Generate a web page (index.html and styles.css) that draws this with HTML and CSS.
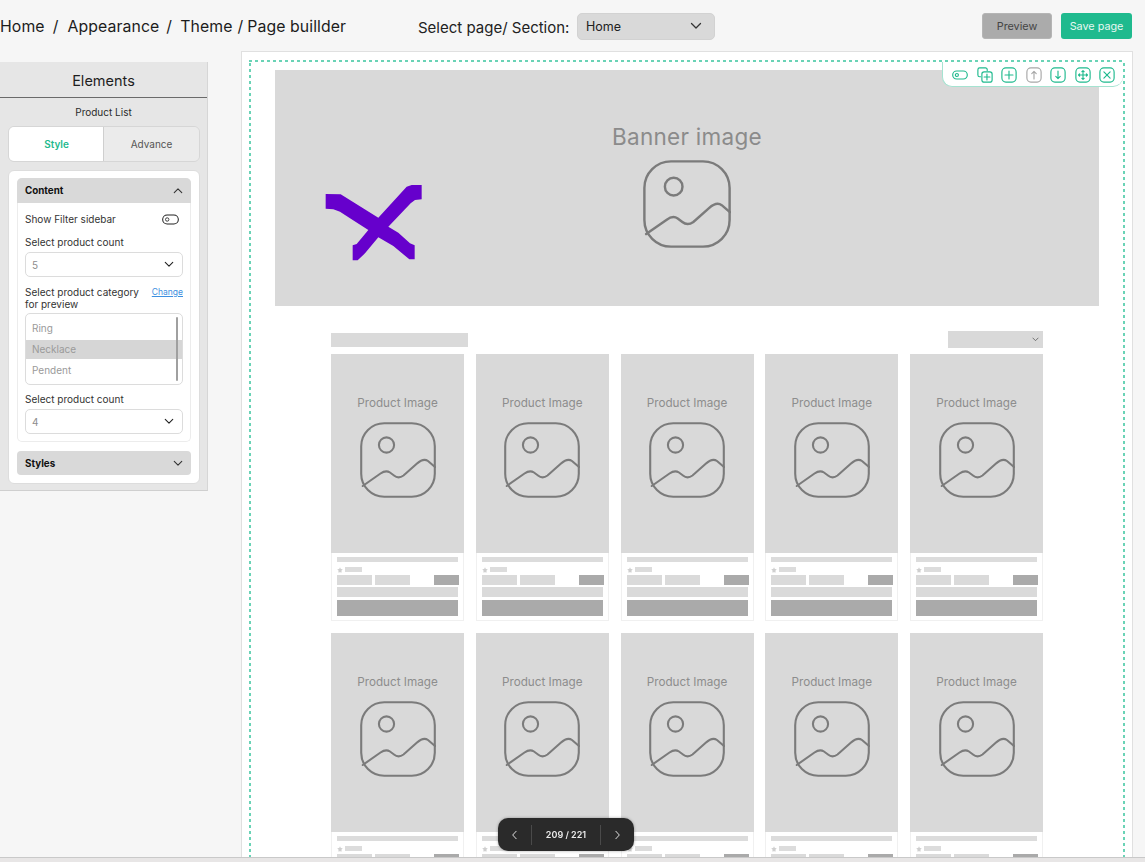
FILE: index.html
```html
<!DOCTYPE html>
<html lang="en">
<head>
<meta charset="utf-8">
<title>Page builder</title>
<link rel="stylesheet" href="styles.css">
</head>
<body>
<svg class="defs" width="0" height="0" aria-hidden="true">
  <symbol id="pic" viewBox="0 0 76 76">
    <rect x="1.200" y="1.200" width="73.600" height="73.600" rx="23" fill="none" stroke="currentColor" stroke-width="2.100"/>
    <circle cx="26.500" cy="23" r="7.600" fill="none" stroke="currentColor" stroke-width="2.100"/>
    <path d="M2.700 64 20.500 51.500C24 49 27 48.500 30 50.500L34 53.500C37 56 40 56 43.500 53.500L57 41.500C61 38 64.500 36.500 68 39L75 45" fill="none" stroke="currentColor" stroke-width="2.100" stroke-linecap="round"/>
  </symbol>
  <symbol id="chev" viewBox="0 0 12 8">
    <path d="M1.500 1.500 6 6l4.500-4.500" fill="none" stroke="currentColor" stroke-width="1.300" stroke-linecap="round" stroke-linejoin="round"/>
  </symbol>
  <symbol id="star" viewBox="0 0 10 10">
    <path d="m5 .5 1.400 3 3.200.4-2.300 2.200.6 3.200L5 8.700 2.100 9.300l.6-3.200L.4 3.900l3.200-.4z" fill="currentColor"/>
  </symbol>
</svg>

<header class="topbar">
  <div class="crumbs"><span>Home</span><span class="s1">/</span><span class="s2">Appearance</span><span class="s3">/</span><span class="s4">Theme</span><span class="s5">/</span><span class="s6">Page buillder</span></div>
  <div class="page-select">
    <span class="page-label">Select page/ Section:</span>
    <div class="page-drop"><span>Home</span><svg class="chev-top"><use href="#chev"/></svg></div>
  </div>
  <div class="actions">
    <button class="btn btn-grey">Preview</button>
    <button class="btn btn-green">Save page</button>
  </div>
</header>

<main class="workspace">
  <aside class="sidebar">
    <h2 class="side-title">Elements</h2>
    <div class="side-sub">Product List</div>
    <div class="tabs">
      <div class="tab tab-on">Style</div>
      <div class="tab">Advance</div>
    </div>
    <div class="panel">
      <section class="acc">
        <div class="acc-head acc-open"><span>Content</span><svg class="chev flip"><use href="#chev"/></svg></div>
        <div class="acc-body">
          <div class="row-between filter-row">
            <span>Show Filter sidebar</span>
            <svg class="toggle" viewBox="0 0 18 11"><rect x=".7" y=".7" width="16.600" height="9.600" rx="4.800" fill="none" stroke="#222" stroke-width="1.100"/><circle cx="5.500" cy="5.500" r="1.800" fill="none" stroke="#222" stroke-width=".9"/></svg>
          </div>
          <label class="lbl">Select product count</label>
          <div class="sel"><span>5</span><svg class="chev"><use href="#chev"/></svg></div>
          <div class="row-between cat-row">
            <span class="lbl-cat">Select product category for preview</span>
            <a class="change">Change</a>
          </div>
          <div class="list">
            <div class="item">Ring</div>
            <div class="item item-on">Necklace</div>
            <div class="item">Pendent</div>
            <i class="scroll"></i>
          </div>
          <label class="lbl lbl-tight">Select product count</label>
          <div class="sel"><span>4</span><svg class="chev"><use href="#chev"/></svg></div>
        </div>
      </section>
      <div class="acc-head acc-closed"><span>Styles</span><svg class="chev"><use href="#chev"/></svg></div>
    </div>
  </aside>

  <section class="canvas">
    <div class="frame">
      <div class="toolbar">
        <svg viewBox="0 0 18 18"><rect x=".8" y="4.500" width="16.400" height="9" rx="4.500"/><circle cx="5.500" cy="9" r="1.700"/></svg>
        <svg viewBox="0 0 18 18"><path d="M11.500 4V3a2 2 0 0 0-2-2H3a2 2 0 0 0-2 2v6a2 2 0 0 0 2 2h1"/><rect x="5.500" y="5.500" width="11.500" height="11.500" rx="2.500"/><path d="M11.200 8v6.500M8 11.200h6.500"/></svg>
        <svg viewBox="0 0 18 18"><rect x="1" y="1" width="16" height="16" rx="4.500"/><path d="M9 4.500v9M4.500 9h9"/></svg>
        <svg class="muted" viewBox="0 0 18 18"><rect x="1" y="1" width="16" height="16" rx="4.500"/><path d="M9 13.500v-8M6.500 7.500 9 5l2.500 2.500"/></svg>
        <svg viewBox="0 0 18 18"><rect x="1" y="1" width="16" height="16" rx="4.500"/><path d="M9 4.500v8M6.500 10.500 9 13l2.500-2.500"/></svg>
        <svg viewBox="0 0 18 18"><rect x="1" y="1" width="16" height="16" rx="4.500"/><path d="M9 4v10M4 9h10M7.700 5.200 9 4l1.300 1.200M7.700 12.800 9 14l1.300-1.200M5.200 7.700 4 9l1.200 1.300M12.800 7.700 14 9l-1.200 1.300"/></svg>
        <svg viewBox="0 0 18 18"><rect x="1" y="1" width="16" height="16" rx="4.500"/><path d="m5.500 5.500 7 7M12.500 5.500l-7 7"/></svg>
      </div>

      <div class="banner">
        <div class="banner-text">Banner image</div>
        <svg class="banner-pic"><use href="#pic"/></svg>
        <svg class="scribble" viewBox="0 0 390 450"><path d="M47 222 92 223 205 293 290 200 305 195H335V238L315 240 302 250 235 320 265 338 300 370 314 376V418H298L250 378 205 352 165 400 143 421H128V376L140 372 175 330 120 295 90 275 70 268 47 266Z"/></svg>
      </div>

      <div class="products">
        <div class="prod-head">
          <div class="ph-title"></div>
          <div class="ph-drop"><svg class="chev-mini"><use href="#chev"/></svg></div>
        </div>
        <div class="grid">
          <article class="card"><div class="card-img"><span>Product Image</span><svg class="card-pic"><use href="#pic"/></svg></div><div class="meta"><div class="b-title"></div><div class="b-rate"><svg class="star"><use href="#star"/></svg><i></i></div><div class="b-price"><i></i><i></i><b></b></div><div class="b-line"></div><div class="b-btn"></div></div></article>
          <article class="card"><div class="card-img"><span>Product Image</span><svg class="card-pic"><use href="#pic"/></svg></div><div class="meta"><div class="b-title"></div><div class="b-rate"><svg class="star"><use href="#star"/></svg><i></i></div><div class="b-price"><i></i><i></i><b></b></div><div class="b-line"></div><div class="b-btn"></div></div></article>
          <article class="card"><div class="card-img"><span>Product Image</span><svg class="card-pic"><use href="#pic"/></svg></div><div class="meta"><div class="b-title"></div><div class="b-rate"><svg class="star"><use href="#star"/></svg><i></i></div><div class="b-price"><i></i><i></i><b></b></div><div class="b-line"></div><div class="b-btn"></div></div></article>
          <article class="card"><div class="card-img"><span>Product Image</span><svg class="card-pic"><use href="#pic"/></svg></div><div class="meta"><div class="b-title"></div><div class="b-rate"><svg class="star"><use href="#star"/></svg><i></i></div><div class="b-price"><i></i><i></i><b></b></div><div class="b-line"></div><div class="b-btn"></div></div></article>
          <article class="card"><div class="card-img"><span>Product Image</span><svg class="card-pic"><use href="#pic"/></svg></div><div class="meta"><div class="b-title"></div><div class="b-rate"><svg class="star"><use href="#star"/></svg><i></i></div><div class="b-price"><i></i><i></i><b></b></div><div class="b-line"></div><div class="b-btn"></div></div></article>
          <article class="card"><div class="card-img"><span>Product Image</span><svg class="card-pic"><use href="#pic"/></svg></div><div class="meta"><div class="b-title"></div><div class="b-rate"><svg class="star"><use href="#star"/></svg><i></i></div><div class="b-price"><i></i><i></i><b></b></div><div class="b-line"></div><div class="b-btn"></div></div></article>
          <article class="card"><div class="card-img"><span>Product Image</span><svg class="card-pic"><use href="#pic"/></svg></div><div class="meta"><div class="b-title"></div><div class="b-rate"><svg class="star"><use href="#star"/></svg><i></i></div><div class="b-price"><i></i><i></i><b></b></div><div class="b-line"></div><div class="b-btn"></div></div></article>
          <article class="card"><div class="card-img"><span>Product Image</span><svg class="card-pic"><use href="#pic"/></svg></div><div class="meta"><div class="b-title"></div><div class="b-rate"><svg class="star"><use href="#star"/></svg><i></i></div><div class="b-price"><i></i><i></i><b></b></div><div class="b-line"></div><div class="b-btn"></div></div></article>
          <article class="card"><div class="card-img"><span>Product Image</span><svg class="card-pic"><use href="#pic"/></svg></div><div class="meta"><div class="b-title"></div><div class="b-rate"><svg class="star"><use href="#star"/></svg><i></i></div><div class="b-price"><i></i><i></i><b></b></div><div class="b-line"></div><div class="b-btn"></div></div></article>
          <article class="card"><div class="card-img"><span>Product Image</span><svg class="card-pic"><use href="#pic"/></svg></div><div class="meta"><div class="b-title"></div><div class="b-rate"><svg class="star"><use href="#star"/></svg><i></i></div><div class="b-price"><i></i><i></i><b></b></div><div class="b-line"></div><div class="b-btn"></div></div></article>
        </div>
      </div>
    </div>
  </section>
</main>

<footer class="strip"></footer>

<nav class="pager">
  <svg class="pg-arrow" viewBox="0 0 8 12"><path d="M6 1.500 1.800 6 6 10.500"/></svg>
  <span class="pg-sep"></span>
  <span class="pg-text">209 / 221</span>
  <span class="pg-sep"></span>
  <svg class="pg-arrow" viewBox="0 0 8 12"><path d="M2 1.500 6.200 6 2 10.500"/></svg>
</nav>
</body>
</html>
```
FILE: styles.css
```css
* { box-sizing: border-box; }
html, body { margin: 0; height: 862px; overflow: hidden; }
body {
  display: flex;
  flex-direction: column;
  background: #f6f6f6;
  color: #222;
  font-family: Inter, "Liberation Sans", sans-serif;
}
.defs { position: absolute; }

.topbar {
  height: 51px;
  flex: none;
  display: grid;
  grid-template-columns: 418px 1fr auto;
  padding-right: 13px;
  align-items: start;
}
.crumbs {
  display: flex;
  margin-top: 17px;
  font-size: 15.800px;
  line-height: 20px;
  color: #1c1c1c;
  white-space: nowrap;
  letter-spacing: .1px;
}
.s1 { margin-left: 8px; }
.s2 { margin-left: 9px; }
.s3 { margin-left: 7px; }
.s4 { margin-left: 8px; }
.s5 { margin-left: 5px; }
.s6 { margin-left: 4px; }

.page-select { display: flex; align-items: flex-start; margin-top: 13px; }
.page-label { font-size: 15px; line-height: 18px; margin-top: 6px; color: #222; width: 159px; }
.page-drop {
  width: 138px;
  height: 27px;
  background: #d9d9d9;
  border: 1px solid #d2d2d2;
  border-radius: 5px;
  display: flex;
  align-items: center;
  justify-content: space-between;
  padding: 0 12px 1px 8px;
  font-size: 12.500px;
  color: #222;
}
.chev-top { width: 12px; height: 8px; color: #333; }

.actions { display: flex; gap: 9px; margin-top: 13px; }
.btn {
  height: 26px;
  border: 0;
  border-radius: 3px;
  font-family: inherit;
  font-size: 10.800px;
  padding: 0;
}
.btn-grey { width: 70px; background: #ababab; color: #444; border: 1px solid #b5b5b5; }
.btn-green { width: 71px; background: #1fba8e; color: #e6f8f2; }

.workspace { flex: 1; min-height: 0; display: flex; align-items: flex-start; }

.sidebar {
  width: 208px;
  height: 429px;
  flex: none;
  margin-top: 11px;
  background: #e6e6e6;
  border-right: 1px solid #d6d6d6;
  border-bottom: 1px solid #cfcfcf;
}
.side-title {
  margin: 0;
  height: 36px;
  border-bottom: 1px solid #6a6a6a;
  text-align: center;
  font-size: 14.500px;
  font-weight: 400;
  line-height: 37px;
  color: #1e1e1e;
}
.side-sub { text-align: center; font-size: 10px; line-height: 12px; margin-top: 8px; color: #2a2a2a; }
.tabs {
  display: flex;
  width: 192px;
  height: 36px;
  margin: 8px 0 0 8px;
  border: 1px solid #d6d6d6;
  border-radius: 6px;
  overflow: hidden;
  font-size: 10px;
}
.tab { flex: 1; display: flex; align-items: center; justify-content: center; color: #555; background: #ebebeb; }
.tab-on { background: #fff; color: #1fba8e; font-weight: 600; border-right: 1px solid #cfcfcf; flex: none; width: 95px; padding-left: 1px; }
.panel {
  width: 192px;
  height: 314px;
  margin: 8px 0 0 8px;
  padding: 7px 8px 8px;
  background: #fff;
  border: 1px solid #ddd;
  border-radius: 6px;
}
.acc { border: 1px solid #ececec; border-top: 0; border-radius: 5px; height: 264px; }
.acc-head {
  display: flex;
  align-items: center;
  justify-content: space-between;
  padding: 0 8px;
  background: #d9d9d9;
  font-size: 9.800px;
  font-weight: 700;
  color: #111;
}
.acc-open { height: 25px; border-radius: 5px 5px 0 0; margin: 0 -1px; }
.acc-closed { height: 24px; border-radius: 4px; margin-top: 9px; }
.chev { width: 10px; height: 7px; color: #333; }
.flip { transform: rotate(180deg); }
.acc-body { padding: 0 7px; font-size: 10px; color: #333; }
.row-between { display: flex; justify-content: space-between; }
.filter-row { align-items: center; height: 12px; margin-top: 10px; padding-right: 4px; }
.toggle { width: 17px; height: 11px; }
.lbl { display: block; line-height: 12px; margin-top: 11px; }
.lbl-tight { margin-top: 8px; }
.sel {
  height: 25px;
  margin-top: 4px;
  border: 1px solid #dcdcdc;
  border-radius: 5px;
  display: flex;
  align-items: center;
  justify-content: space-between;
  padding: 0 8px 0 6px;
  color: #8d8d8d;
}
.sel .chev { width: 10px; height: 7px; color: #222; }
.cat-row { margin-top: 9px; line-height: 12px; }
.lbl-cat { width: 120px; }
.change { font-size: 8.500px; color: #3d8fe0; text-decoration: underline; }
.list {
  position: relative;
  height: 72px;
  margin-top: 3px;
  border: 1px solid #dcdcdc;
  border-radius: 5px;
  padding-top: 5px;
  overflow: hidden;
  color: #9a9a9a;
}
.item { height: 21px; line-height: 18px; padding-left: 6px; }
.item-on { background: #d6d6d6; height: 19px; margin-bottom: 2px; }
.scroll { position: absolute; right: 4px; top: 3px; width: 2px; height: 64px; background: #a0a0a0; border-radius: 1px; }

.canvas {
  width: 892px;
  height: 806px;
  margin-left: 33px;
  background: #fff;
  border: 1px solid #e0e0e0;
  border-bottom: 0;
  padding: 8px 7px 0;
  overflow: hidden;
}
.frame {
  position: relative;
  width: 876px;
  height: 900px;
  padding: 10px 26px;
  background:
    repeating-linear-gradient(90deg, #6ad3b6 0 3px, transparent 3px 6px) left top / 100% 2px no-repeat,
    repeating-linear-gradient(0deg, #6ad3b6 0 3px, transparent 3px 6px) left top / 2px 100% no-repeat,
    repeating-linear-gradient(0deg, #6ad3b6 0 3px, transparent 3px 6px) right top / 2px 100% no-repeat;
}
.toolbar {
  position: absolute;
  top: 2px;
  right: 2px;
  width: 181px;
  height: 25px;
  background: #fff;
  border: 1px solid #a5e3d1;
  border-top: 0;
  border-right: 0;
  border-radius: 0 0 10px 10px;
  display: flex;
  align-items: center;
  gap: 8.500px;
  padding: 1px 0 0 9px;
  z-index: 2;
}
.toolbar svg {
  width: 16px;
  height: 16px;
  fill: none;
  stroke: #1fba8e;
  stroke-width: 1.300;
  stroke-linecap: round;
  stroke-linejoin: round;
  flex: none;
}
.toolbar .muted { stroke: #a8a8a8; }

.banner {
  position: relative;
  height: 236px;
  background: #d9d9d9;
  display: flex;
  flex-direction: column;
  align-items: center;
  padding-top: 54px;
  color: #7b7b7b;
}
.banner-text { font-size: 22.500px; line-height: 26px; color: #8b8b8b; letter-spacing: .28px; }
.banner-pic { width: 88px; height: 88px; margin-top: 10px; }
.scribble { position: absolute; left: 35px; top: 50px; width: 130px; height: 150px; fill: #6600cc; }

.products { margin: 26px 56px 0; }
.prod-head { display: flex; justify-content: space-between; height: 22px; }
.ph-title { width: 137px; height: 14px; margin-top: 1px; background: #dadada; }
.ph-drop {
  width: 95px;
  height: 17px;
  margin-top: -1px;
  background: #d9d9d9;
  display: flex;
  align-items: center;
  justify-content: flex-end;
  padding-right: 4px;
}
.chev-mini { width: 7px; height: 5px; color: #555; }
.grid {
  display: grid;
  grid-template-columns: repeat(5, 133px);
  column-gap: 11.750px;
  row-gap: 12px;
}
.card { height: 267px; border: 1px solid #f0f0f0; border-top: 0; }
.card-img {
  height: 199px;
  margin: 0 -1px;
  background: #d9d9d9;
  display: flex;
  flex-direction: column;
  align-items: center;
  padding-top: 42px;
  color: #7b7b7b;
  font-size: 11.700px;
  line-height: 15px;
}
.card-img span { color: #8d8d8d; }
.card-pic { width: 76px; height: 76px; margin-top: 11px; }
.meta { padding: 4px 5px 0; }
.b-title { height: 5px; background: #dcdcdc; }
.b-rate { display: flex; align-items: center; gap: 2px; margin-top: 5px; height: 5px; }
.star { width: 6px; height: 6px; color: #cfcfcf; }
.b-rate i { width: 17px; height: 5px; background: #dcdcdc; }
.b-price { display: flex; gap: 3px; margin-top: 3px; height: 10px; }
.b-price i { width: 35px; background: #dadada; }
.b-price b { width: 25px; margin: 0 -1px 0 auto; background: #aaa; }
.b-line { height: 10px; margin-top: 2px; background: #dadada; }
.b-btn { height: 16px; margin-top: 3px; background: #aaa; }

.strip { height: 5px; flex: none; background: #e8e6e6; border-top: 1px solid #c9c9c9; }

.pager {
  position: fixed;
  left: 498px;
  top: 818px;
  width: 136px;
  height: 33px;
  background: #2a2a2a;
  border-radius: 10px;
  display: flex;
  align-items: center;
  justify-content: space-between;
  padding: 0 13px;
  color: #eaeaea;
  box-shadow: 0 0 3px rgba(0,0,0,.35);
}
.pg-arrow { width: 7px; height: 10px; fill: none; stroke: #ddd; stroke-width: 1.200; stroke-linecap: round; stroke-linejoin: round; flex: none; }
.pg-sep { width: 1px; height: 20px; background: #4a4a4a; flex: none; }
.pg-text { font-size: 9px; font-weight: 600; }
```
